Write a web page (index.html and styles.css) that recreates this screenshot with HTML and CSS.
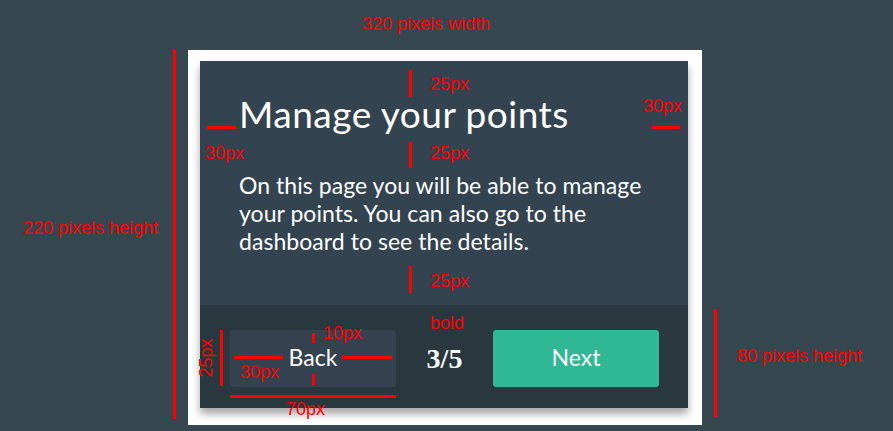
FILE: index.html
```html
<!DOCTYPE html>
<html>
<head>
<meta charset="utf-8">
<link rel="stylesheet" href="styles.css">
</head>
<body>
<div class="stage">
  <div class="frame">
    <div class="card">
      <div class="content">
        <h1 class="title">Manage your points</h1>
        <p class="text">On this page you will be able to manage your points. You can also go to the dashboard to see the details.</p>
      </div>
      <div class="footer">
        <button class="btn btn-back">Back</button>
        <span class="counter">3/5</span>
        <button class="btn btn-next">Next</button>
      </div>
    </div>
  </div>

  <div class="ann ann-width">320 pixels width</div>
  <div class="ann ann-height">220 pixels height</div>
  <div class="ann ann-footer">80 pixels height</div>
  <div class="line vline line-left"></div>
  <div class="line vline line-right"></div>

  <div class="line vline m-top1"></div>
  <div class="ann t-top1">25px</div>
  <div class="line hline m-left"></div>
  <div class="ann t-left">30px</div>
  <div class="line hline m-right"></div>
  <div class="ann t-right">30px</div>
  <div class="line vline m-top2"></div>
  <div class="ann t-top2">25px</div>
  <div class="line vline m-top3"></div>
  <div class="ann t-top3">25px</div>

  <div class="ann t-bold">bold</div>
  <div class="line vline m-bh"></div>
  <div class="ann t-bh">25px</div>
  <div class="line hline m-bl"></div>
  <div class="line hline m-br"></div>
  <div class="line vline m-bt"></div>
  <div class="line vline m-bb"></div>
  <div class="ann t-b10">10px</div>
  <div class="ann t-b30">30px</div>
  <div class="line hline m-bw"></div>
  <div class="ann t-b70">70px</div>
</div>
</body>
</html>
```

FILE: styles.css
```css
html, body {
  margin: 0;
  padding: 0;
  background: #37474f;
}

.stage {
  position: relative;
  width: 893px;
  height: 431px;
  overflow: hidden;
  box-sizing: border-box;
  padding: 50px 0 0 188px;
  font-family: Lato, "Open Sans", sans-serif;
}

.frame {
  width: 514px;
  box-sizing: border-box;
  background: #ffffff;
  padding: 11px 14px 17px 12px;
}

.card {
  width: 488px;
  box-shadow: 0 6px 8px rgba(0, 0, 0, 0.35);
}

.content {
  background: #344350;
  height: 244px;
  box-sizing: border-box;
  padding: 33px 20px 0 39px;
}

.title {
  margin: 0;
  font-weight: 400;
  font-size: 37px;
  line-height: 40px;
  color: #ffffff;
  letter-spacing: 0.5px;
}

.text {
  margin: 37px 0 0 0;
  width: 425px;
  font-size: 23px;
  line-height: 28px;
  color: #ffffff;
  letter-spacing: 0.05px;
}

.footer {
  background: #29373f;
  height: 103px;
  box-sizing: border-box;
  padding: 25px 29px 21px 30px;
  display: flex;
  align-items: center;
  justify-content: space-between;
}

.btn {
  width: 166px;
  height: 57px;
  border: 0;
  border-radius: 3px;
  font-family: Lato, "Open Sans", sans-serif;
  font-size: 23px;
  color: #ffffff;
  padding: 0 0 4px 0;
}

.btn-back {
  background: #34434f;
}

.btn-next {
  background: #2fb893;
}

.counter {
  font-family: "Liberation Serif", serif;
  font-weight: 700;
  font-size: 28px;
  color: #ffffff;
}

/* annotations */
.ann {
  position: absolute;
  font-family: "Liberation Sans", Arial, sans-serif;
  font-size: 18px;
  line-height: 16px;
  color: #ff0000;
  white-space: nowrap;
}

.line {
  position: absolute;
  background: #ff0000;
}

.vline { width: 3px; }
.hline { height: 3px; }

.ann-width { left: 362px; top: 16px; }
.ann-height { left: 23px; top: 220px; }
.ann-footer { left: 737px; top: 348px; }
.line-left { left: 173px; top: 50px; height: 369px; }
.line-right { left: 714px; top: 309px; height: 108px; }

.m-top1 { left: 409px; top: 70px; height: 27px; }
.t-top1 { left: 430px; top: 76px; }
.m-left { left: 207px; top: 126px; width: 29px; }
.t-left { left: 205px; top: 145px; }
.m-right { left: 652px; top: 126px; width: 28px; }
.t-right { left: 643px; top: 98px; }
.m-top2 { left: 409px; top: 142px; height: 26px; }
.t-top2 { left: 430px; top: 145px; }
.m-top3 { left: 409px; top: 266px; height: 27px; }
.t-top3 { left: 430px; top: 273px; }

.t-bold { left: 430px; top: 315px; }
.m-bh { left: 220px; top: 330px; height: 56px; }
.t-bh { left: 186px; top: 350px; transform: rotate(-90deg); }
.m-bl { left: 234px; top: 356px; width: 49px; }
.m-br { left: 342px; top: 356px; width: 50px; }
.m-bt { left: 312px; top: 333px; height: 10px; }
.m-bb { left: 312px; top: 374px; height: 11px; }
.t-b10 { left: 323px; top: 325px; }
.t-b30 { left: 240px; top: 364px; }
.m-bw { left: 230px; top: 395px; width: 166px; }
.t-b70 { left: 286px; top: 401px; }
```
